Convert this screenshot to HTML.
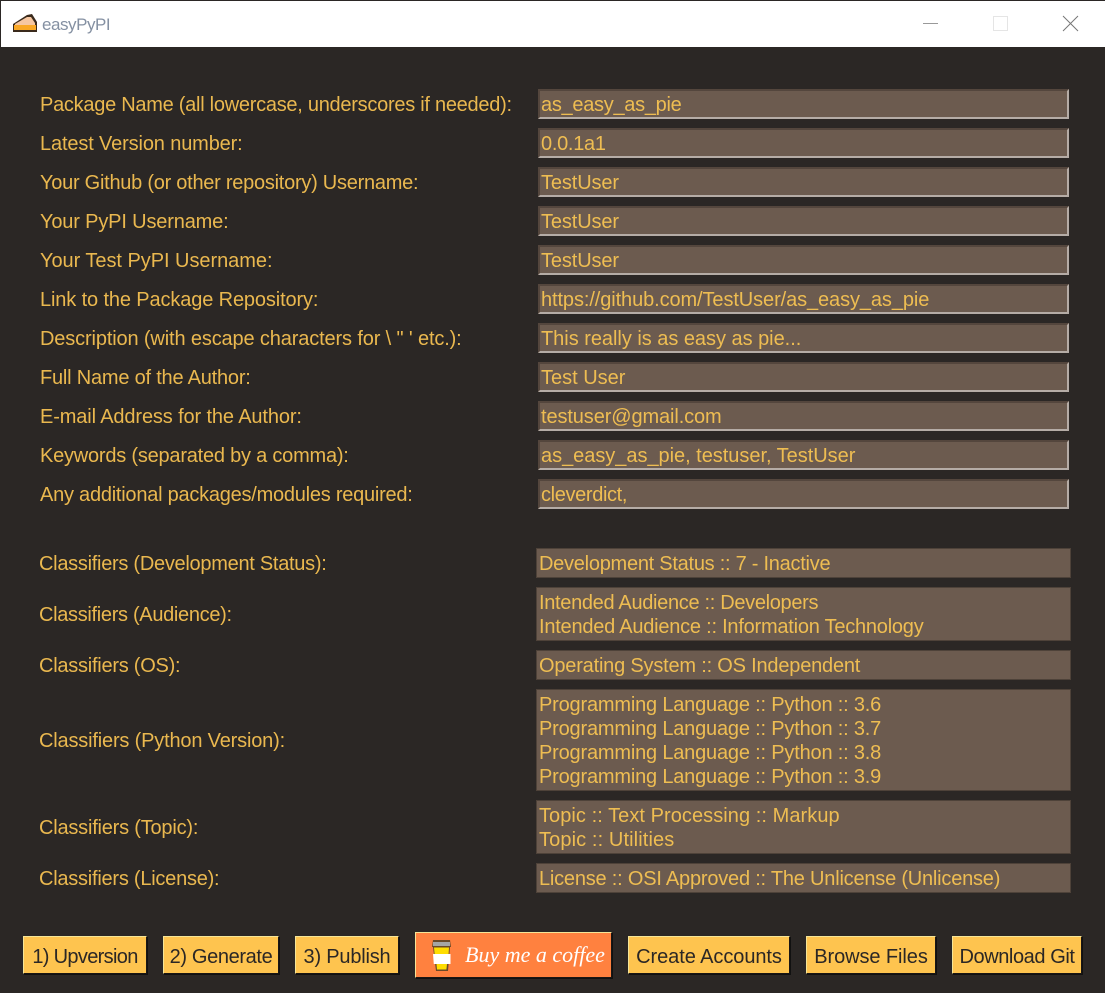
<!DOCTYPE html>
<html><head><meta charset="utf-8"><style>
html,body{margin:0;padding:0;width:1105px;height:993px;overflow:hidden;background:#2b2725}
body{position:relative;font-family:"Liberation Sans",sans-serif;font-size:20px;color:#eab84f}
.a{position:absolute;white-space:pre;line-height:24px}
.title{position:absolute;left:1px;top:1px;width:1104px;height:46px;background:#fff}
.in{position:absolute;left:538px;width:531px;height:30px;box-sizing:border-box;background:#6c5b4f;border:2px solid;border-color:#54463d #b5aca6 #b5aca6 #54463d;padding-left:1px;line-height:29px;white-space:pre;color:#eebd52}
.box{position:absolute;left:536px;width:535px;box-sizing:border-box;background:#6c5b4f;border:1px solid #4e4239;padding:3px 2px;line-height:24px;white-space:pre;color:#eebd52}
.box span{display:block}
.btn{position:absolute;top:936px;height:38px;box-sizing:border-box;background:#fec44f;border:1px solid;border-color:#f5e597 #1a1614 #1a1614 #f5e597;box-shadow:1px 1px 0 #111;color:#2b2725;text-align:center;line-height:38px;white-space:pre}
</style></head><body>
<div class="title"></div>
<svg style="position:absolute;left:12px;top:13px" width="26" height="20" viewBox="0 0 26 20"><path d="M1 11 L15 2 L20 1 L25 9 L25 19 L1 19Z" fill="#3a2a1c"/><path d="M3 11 L15 4 L19 4 L23 10 L23 12 L3 12Z" fill="#f6c7a2"/><rect x="2" y="12" width="22" height="5" fill="#f9a826"/></svg>
<div class="a" style="left:42px;top:13px;font-size:17px;letter-spacing:-.45px;color:#8490a2">easyPyPI</div>
<svg style="position:absolute;left:920px;top:14px" width="170" height="20"><path d="M3 9.5H18" stroke="#999" fill="none"/><path d="M73.5 2.5H87.5V16.5H73.5Z" stroke="#e5e5e5" fill="none"/><path d="M143 2L158 17M158 2L143 17" stroke="#777" fill="none"/></svg>

<div class="a" style="left:40px;top:93px;letter-spacing:-.27px">Package Name (all lowercase, underscores if needed):</div>
<div class="a" style="left:40px;top:132px;letter-spacing:-.14px">Latest Version number:</div>
<div class="a" style="left:40px;top:171px;letter-spacing:-.26px">Your Github (or other repository) Username:</div>
<div class="a" style="left:40px;top:210px;letter-spacing:-.16px">Your PyPI Username:</div>
<div class="a" style="left:40px;top:249px;letter-spacing:-.04px">Your Test PyPI Username:</div>
<div class="a" style="left:40px;top:288px;letter-spacing:-.13px">Link to the Package Repository:</div>
<div class="a" style="left:40px;top:327px;letter-spacing:-.14px">Description (with escape characters for \ " ' etc.):</div>
<div class="a" style="left:40px;top:366px;letter-spacing:-.21px">Full Name of the Author:</div>
<div class="a" style="left:40px;top:405px;letter-spacing:-.13px">E-mail Address for the Author:</div>
<div class="a" style="left:40px;top:444px;letter-spacing:-.22px">Keywords (separated by a comma):</div>
<div class="a" style="left:40px;top:483px;letter-spacing:-.24px">Any additional packages/modules required:</div>

<div class="in" style="top:89px;letter-spacing:-.29px">as_easy_as_pie</div>
<div class="in" style="top:128px;letter-spacing:-.29px">0.0.1a1</div>
<div class="in" style="top:167px;letter-spacing:-.12px">TestUser</div>
<div class="in" style="top:206px;letter-spacing:-.12px">TestUser</div>
<div class="in" style="top:245px;letter-spacing:-.12px">TestUser</div>
<div class="in" style="top:284px;letter-spacing:-.1px">https://github.com/TestUser/as_easy_as_pie</div>
<div class="in" style="top:323px;letter-spacing:-.03px">This really is as easy as pie...</div>
<div class="in" style="top:362px">Test User</div>
<div class="in" style="top:401px;letter-spacing:-.11px">testuser@gmail.com</div>
<div class="in" style="top:440px;letter-spacing:-.03px">as_easy_as_pie, testuser, TestUser</div>
<div class="in" style="top:479px;letter-spacing:-.36px">cleverdict,</div>

<div class="a" style="left:39px;top:552px;letter-spacing:-.28px">Classifiers (Development Status):</div>
<div class="a" style="left:39px;top:603px;letter-spacing:-.32px">Classifiers (Audience):</div>
<div class="a" style="left:39px;top:654px;letter-spacing:-.25px">Classifiers (OS):</div>
<div class="a" style="left:39px;top:729px;letter-spacing:-.18px">Classifiers (Python Version):</div>
<div class="a" style="left:39px;top:816px;letter-spacing:-.21px">Classifiers (Topic):</div>
<div class="a" style="left:39px;top:867px;letter-spacing:-.24px">Classifiers (License):</div>

<div class="box" style="top:548px;height:30px"><span style="letter-spacing:-.26px">Development Status :: 7 - Inactive</span></div>
<div class="box" style="top:587px;height:54px"><span style="letter-spacing:-.32px">Intended Audience :: Developers</span><span style="letter-spacing:-.23px">Intended Audience :: Information Technology</span></div>
<div class="box" style="top:650px;height:30px"><span style="letter-spacing:-.2px">Operating System :: OS Independent</span></div>
<div class="box" style="top:689px;height:102px;letter-spacing:-.19px"><span>Programming Language :: Python :: 3.6</span><span>Programming Language :: Python :: 3.7</span><span>Programming Language :: Python :: 3.8</span><span>Programming Language :: Python :: 3.9</span></div>
<div class="box" style="top:800px;height:54px"><span style="letter-spacing:.06px">Topic :: Text Processing :: Markup</span><span style="letter-spacing:.11px">Topic :: Utilities</span></div>
<div class="box" style="top:863px;height:30px"><span style="letter-spacing:-.21px">License :: OSI Approved :: The Unlicense (Unlicense)</span></div>

<div class="btn" style="left:23px;width:124px;line-height:40px;letter-spacing:-.67px">1) Upversion</div>
<div class="btn" style="left:163px;width:116px;line-height:40px;letter-spacing:-.36px">2) Generate</div>
<div class="btn" style="left:295px;width:104px;line-height:40px;letter-spacing:-.2px">3) Publish</div>
<div class="btn" style="left:415px;top:932px;width:197px;height:46px;background:#ff813f;color:#fff;line-height:44px;font-family:'Liberation Serif',serif;font-style:italic;font-size:22px;text-align:left;padding-left:49px">Buy me a coffee</div>
<svg style="position:absolute;left:430px;top:939px" width="23" height="33" viewBox="0 0 23 33"><path d="M2 8L3 1H20L21 8H20L18 32H6L3 8Z" fill="#6a4a2a"/><rect x="3" y="3" width="17" height="4" fill="#a5a5a5"/><path d="M4 8.5H19L18.6 15H4.6Z" fill="#ffdd00"/><path d="M3 15H20.5V25H3.8Z" fill="#fff"/><path d="M6.5 25H17L16.4 30.5H7Z" fill="#ffdd00"/></svg>
<div class="btn" style="left:628px;width:162px;line-height:40px;letter-spacing:-.07px">Create Accounts</div>
<div class="btn" style="left:806px;width:130px;line-height:40px;letter-spacing:-.08px">Browse Files</div>
<div class="btn" style="left:952px;width:130px;line-height:40px;letter-spacing:-.42px">Download Git</div>
</body></html>
